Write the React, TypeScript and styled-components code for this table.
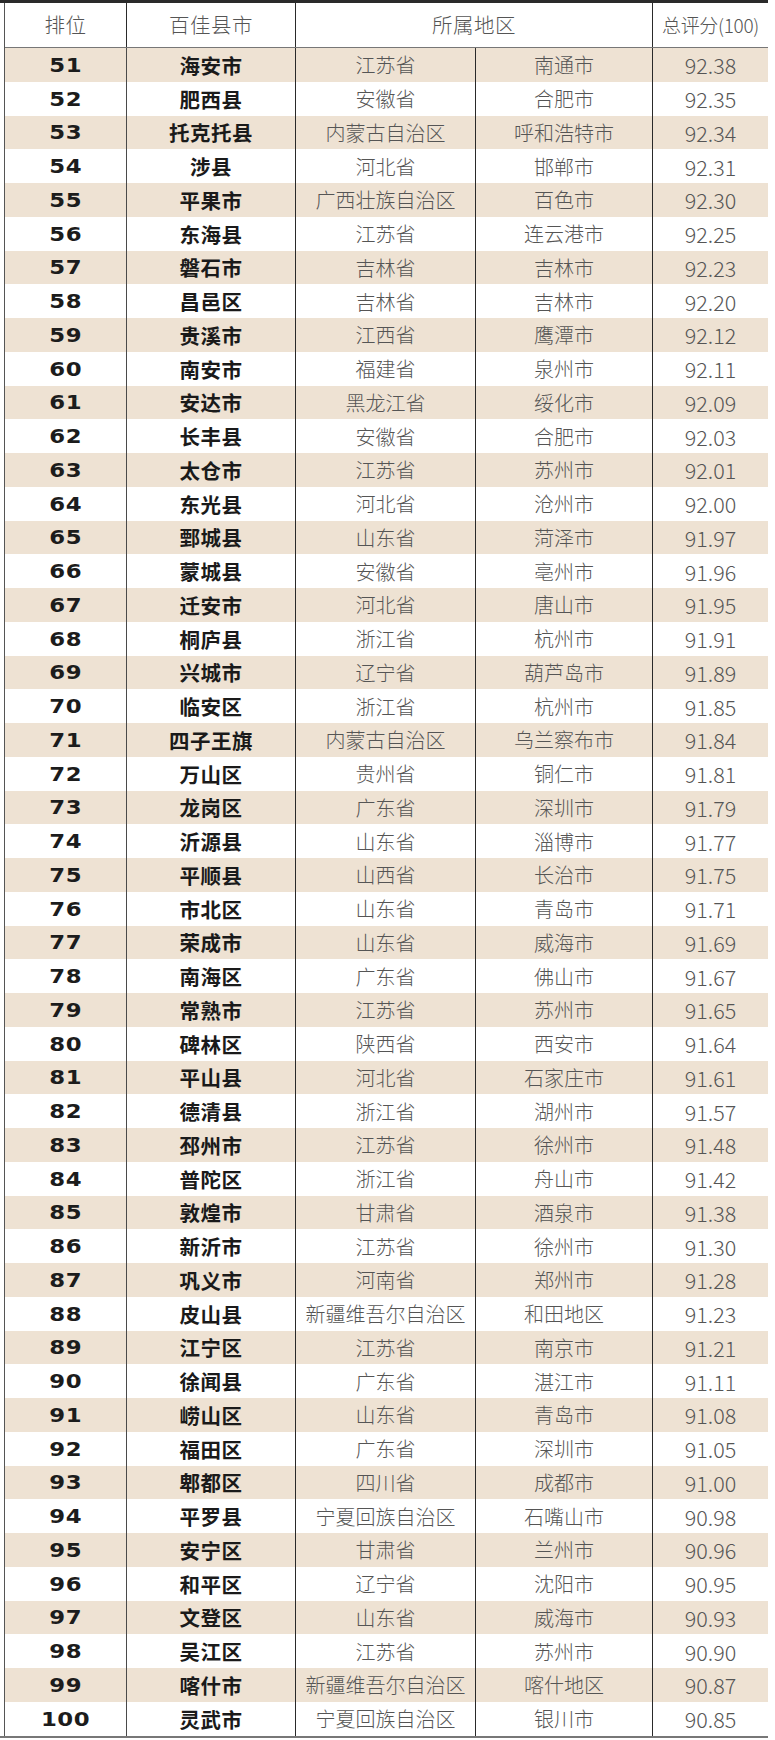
import React from "react";
import styled, { createGlobalStyle } from "styled-components";

const GlobalStyle = createGlobalStyle`
  html, body { margin: 0; padding: 0; background: #ffffff; }
  body { font-family: "Noto Sans CJK SC", "Noto Sans", sans-serif; }
`;

type Row = [number, string, string, string, string];

const rows: Row[] = [
  [51, "海安市", "江苏省", "南通市", "92.38"],
  [52, "肥西县", "安徽省", "合肥市", "92.35"],
  [53, "托克托县", "内蒙古自治区", "呼和浩特市", "92.34"],
  [54, "涉县", "河北省", "邯郸市", "92.31"],
  [55, "平果市", "广西壮族自治区", "百色市", "92.30"],
  [56, "东海县", "江苏省", "连云港市", "92.25"],
  [57, "磐石市", "吉林省", "吉林市", "92.23"],
  [58, "昌邑区", "吉林省", "吉林市", "92.20"],
  [59, "贵溪市", "江西省", "鹰潭市", "92.12"],
  [60, "南安市", "福建省", "泉州市", "92.11"],
  [61, "安达市", "黑龙江省", "绥化市", "92.09"],
  [62, "长丰县", "安徽省", "合肥市", "92.03"],
  [63, "太仓市", "江苏省", "苏州市", "92.01"],
  [64, "东光县", "河北省", "沧州市", "92.00"],
  [65, "鄄城县", "山东省", "菏泽市", "91.97"],
  [66, "蒙城县", "安徽省", "亳州市", "91.96"],
  [67, "迁安市", "河北省", "唐山市", "91.95"],
  [68, "桐庐县", "浙江省", "杭州市", "91.91"],
  [69, "兴城市", "辽宁省", "葫芦岛市", "91.89"],
  [70, "临安区", "浙江省", "杭州市", "91.85"],
  [71, "四子王旗", "内蒙古自治区", "乌兰察布市", "91.84"],
  [72, "万山区", "贵州省", "铜仁市", "91.81"],
  [73, "龙岗区", "广东省", "深圳市", "91.79"],
  [74, "沂源县", "山东省", "淄博市", "91.77"],
  [75, "平顺县", "山西省", "长治市", "91.75"],
  [76, "市北区", "山东省", "青岛市", "91.71"],
  [77, "荣成市", "山东省", "威海市", "91.69"],
  [78, "南海区", "广东省", "佛山市", "91.67"],
  [79, "常熟市", "江苏省", "苏州市", "91.65"],
  [80, "碑林区", "陕西省", "西安市", "91.64"],
  [81, "平山县", "河北省", "石家庄市", "91.61"],
  [82, "德清县", "浙江省", "湖州市", "91.57"],
  [83, "邳州市", "江苏省", "徐州市", "91.48"],
  [84, "普陀区", "浙江省", "舟山市", "91.42"],
  [85, "敦煌市", "甘肃省", "酒泉市", "91.38"],
  [86, "新沂市", "江苏省", "徐州市", "91.30"],
  [87, "巩义市", "河南省", "郑州市", "91.28"],
  [88, "皮山县", "新疆维吾尔自治区", "和田地区", "91.23"],
  [89, "江宁区", "江苏省", "南京市", "91.21"],
  [90, "徐闻县", "广东省", "湛江市", "91.11"],
  [91, "崂山区", "山东省", "青岛市", "91.08"],
  [92, "福田区", "广东省", "深圳市", "91.05"],
  [93, "郫都区", "四川省", "成都市", "91.00"],
  [94, "平罗县", "宁夏回族自治区", "石嘴山市", "90.98"],
  [95, "安宁区", "甘肃省", "兰州市", "90.96"],
  [96, "和平区", "辽宁省", "沈阳市", "90.95"],
  [97, "文登区", "山东省", "威海市", "90.93"],
  [98, "吴江区", "江苏省", "苏州市", "90.90"],
  [99, "喀什市", "新疆维吾尔自治区", "喀什地区", "90.87"],
  [100, "灵武市", "宁夏回族自治区", "银川市", "90.85"],
];

const Page = styled.div`
  width: 768px;
  border-top: 3px solid #2a2a2a;
  border-bottom: 2px solid #777777;
`;

const Table = styled.div`
  margin-left: 4px;
  border-left: 1px solid #555555;
  display: flex;
  flex-direction: column;
`;

const HeaderRow = styled.div`
  display: grid;
  grid-template-columns: 121px 169px 357px 116px;
  height: 44px;
  border-bottom: 1px solid #777777;
  background: #ffffff;
`;

const HeadCell = styled.div<{ $first?: boolean; $small?: boolean }>`
  display: flex;
  align-items: center;
  justify-content: center;
  padding-bottom: 2px;
  box-sizing: border-box;
  border-left: ${(p) => (p.$first ? "none" : "1px solid #2a2a2a")};
  color: #555555;
  font-family: "Noto Sans CJK SC", sans-serif;
  font-weight: 300;
  font-size: ${(p) => (p.$small ? "19px" : "20.5px")};
  letter-spacing: ${(p) => (p.$small ? "-0.3px" : "0.5px")};
`;

const BodyRow = styled.div<{ $shaded: boolean }>`
  display: grid;
  grid-template-columns: 121px 169px 180px 177px 116px;
  height: 33.76px;
  background: ${(p) => (p.$shaded ? "#eee2d3" : "#ffffff")};
`;

const Cell = styled.div<{ $first?: boolean; $soft?: boolean }>`
  display: flex;
  align-items: center;
  justify-content: center;
  box-sizing: border-box;
  border-left: ${(p) =>
    p.$first ? "none" : p.$soft ? "1px solid #4a4a4a" : "1px solid #2a2a2a"};
  white-space: nowrap;
  overflow: hidden;
`;

const RankText = styled.span`
  display: inline-block;
  font-family: "DejaVu Sans", "Liberation Sans", sans-serif;
  font-weight: 800;
  font-size: 19px;
  color: #1c1c1c;
  letter-spacing: 0.5px;
  transform: scaleX(1.2);
`;

const Name = styled(Cell)`
  font-family: "Noto Sans CJK SC", sans-serif;
  font-weight: 700;
  font-size: 20.5px;
  color: #1a1a1a;
  letter-spacing: 0.5px;
`;

const Region = styled(Cell)`
  font-family: "Noto Sans CJK SC", sans-serif;
  font-weight: 300;
  font-size: 20px;
  color: #555555;
`;

const Score = styled(Cell)`
  font-family: "Noto Sans CJK SC", sans-serif;
  font-weight: 300;
  font-size: 21.5px;
  color: #555555;
`;

export default function App() {
  return (
    <>
      <GlobalStyle />
      <Page>
        <Table>
          <HeaderRow>
            <HeadCell $first>排位</HeadCell>
            <HeadCell>百佳县市</HeadCell>
            <HeadCell>所属地区</HeadCell>
            <HeadCell $small>总评分(100)</HeadCell>
          </HeaderRow>
          {rows.map(([rank, name, prov, city, score], i) => (
            <BodyRow key={rank} $shaded={i % 2 === 0}>
              <Cell $first>
                <RankText>{rank}</RankText>
              </Cell>
              <Name $soft>{name}</Name>
              <Region>{prov}</Region>
              <Region>{city}</Region>
              <Score>{score}</Score>
            </BodyRow>
          ))}
        </Table>
      </Page>
    </>
  );
}
